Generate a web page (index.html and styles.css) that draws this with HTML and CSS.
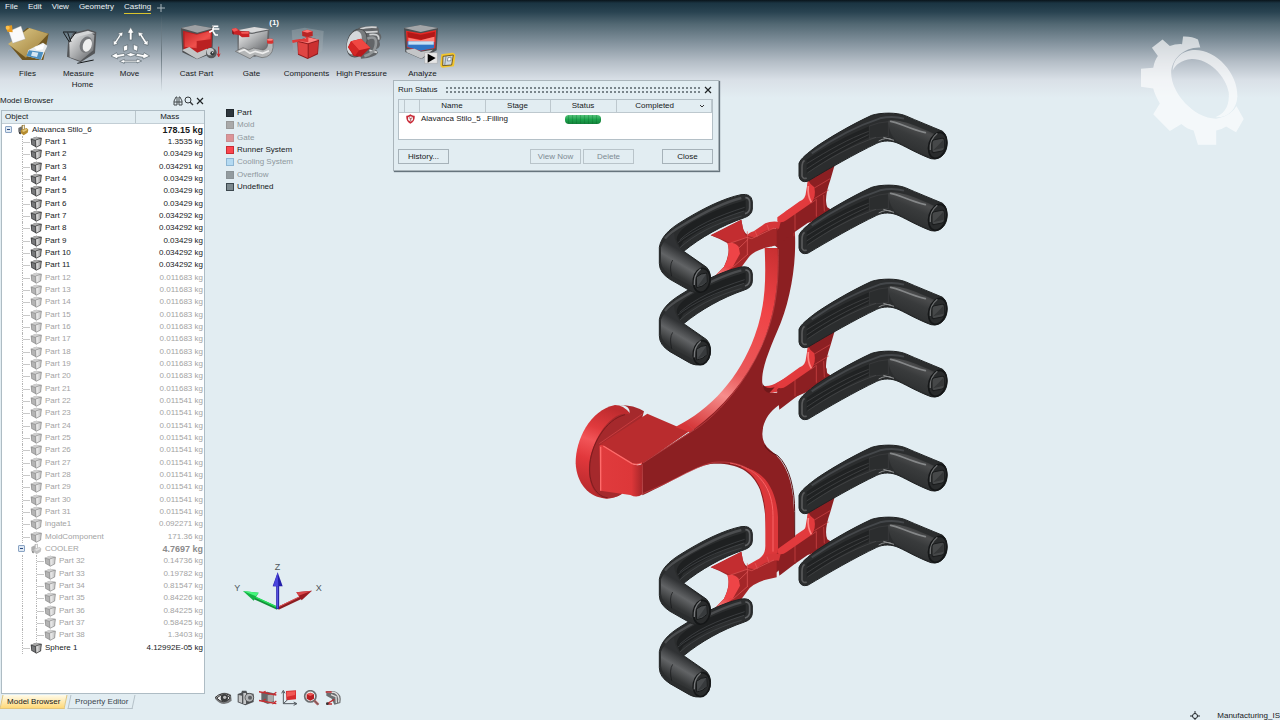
FILE: index.html
```
<!DOCTYPE html>
<html lang="en">
<head>
    <meta charset="UTF-8">
    <meta name="viewport" content="width=device-width, initial-scale=1.0">
    <title>Casting Simulation</title>
    <link rel="stylesheet" href="styles.css">
</head>
<body>
    <!-- Shared gradients and symbols -->
    <svg class="defs" width="0" height="0" aria-hidden="true">
        <defs>
            <linearGradient id="steel" x1="0" y1="0" x2="1" y2="1">
                <stop offset="0" stop-color="#f0f0f0"/><stop offset=".5" stop-color="#a9abad"/><stop offset="1" stop-color="#5d5f62"/>
            </linearGradient>
            <linearGradient id="steelDark" x1="0" y1="0" x2="1" y2="0">
                <stop offset="0" stop-color="#3c3d40"/><stop offset="1" stop-color="#a2a4a6"/>
            </linearGradient>
            <linearGradient id="redFace" x1="0" y1="0" x2="1" y2="1">
                <stop offset="0" stop-color="#c22426"/><stop offset=".6" stop-color="#f0504c"/><stop offset="1" stop-color="#b51f22"/>
            </linearGradient>
            <linearGradient id="gold" x1="0" y1="0" x2="1" y2="1">
                <stop offset="0" stop-color="#e0cd8c"/><stop offset="1" stop-color="#9b7a35"/>
            </linearGradient>
            <linearGradient id="cubeFront" x1="0" y1="0" x2="1" y2="0">
                <stop offset="0" stop-color="#f4f4f4"/><stop offset="1" stop-color="#8a8a8a"/>
            </linearGradient>
            <linearGradient id="tube" gradientUnits="userSpaceOnUse" x1="420" y1="70" x2="380" y2="160">
                <stop offset="0" stop-color="#2c2e2f"/><stop offset=".2" stop-color="#4b4c4d"/><stop offset=".45" stop-color="#393b3c"/><stop offset="1" stop-color="#2b2d2e"/>
            </linearGradient>
            <linearGradient id="tubeLeft" gradientUnits="userSpaceOnUse" x1="400" y1="235" x2="350" y2="320">
                <stop offset="0" stop-color="#303234"/><stop offset=".35" stop-color="#626466"/><stop offset=".7" stop-color="#343637"/><stop offset="1" stop-color="#242627"/>
            </linearGradient>
            <linearGradient id="sweep" gradientUnits="userSpaceOnUse" x1="630" y1="200" x2="380" y2="740">
                <stop offset="0" stop-color="#c93032"/><stop offset=".3" stop-color="#f04346"/><stop offset=".65" stop-color="#e9595a"/><stop offset=".78" stop-color="#f68d8c"/><stop offset="1" stop-color="#d53537"/>
            </linearGradient>
            <linearGradient id="flange" x1=".5" y1="0" x2=".3" y2="1">
                <stop offset="0" stop-color="#bd2b2e"/><stop offset=".25" stop-color="#e03a3d"/><stop offset=".4" stop-color="#f25558"/><stop offset=".6" stop-color="#e2383c"/><stop offset="1" stop-color="#b3282b"/>
            </linearGradient>
            <linearGradient id="blockFront" x1="0" y1="0" x2="1" y2="0">
                <stop offset="0" stop-color="#e03b3d"/><stop offset=".75" stop-color="#dd3739"/><stop offset="1" stop-color="#a62629"/>
            </linearGradient>
            <linearGradient id="fadeRed" x1="1" y1="0" x2="0" y2="1">
                <stop offset="0" stop-color="#e3373a"/><stop offset="1" stop-color="#ffb0ae"/>
            </linearGradient>

            <symbol id="cube" viewBox="0 0 36 36">
                <path d="M2 8 19 2 34 6 32 27 18 34 4 26Z" fill="#3f4042"/>
                <path d="M2 8 19 2 34 6 17 12Z" fill="#a9a9a9"/>
                <path d="M17 12 34 6 32 27 18 34Z" fill="url(#cubeFront)" stroke="#333" stroke-width="2"/>
                <path d="M5 11 15 14 16 30 6 25Z" fill="#77787a"/>
            </symbol>
            <symbol id="group" viewBox="0 0 36 36">
                <path d="M4 12 14 7 17 18 11 24 4 21Z" fill="#6d6d6d"/>
                <path d="M14 4 23 2 23 20 15 20Z" fill="#8d6d22"/>
                <path d="M17 6 21 4 21 18 17 19Z" fill="#f2eee0"/>
                <path d="M12 18 29 12 34 17 32 26 20 34 11 27Z" fill="#b58c2f"/>
                <path d="M14 20 28 14 31 18 20 24Z" fill="#e2c679"/>
                <path d="M4 21 11 24 12 31 7 30Z" fill="#353535"/>
            </symbol>

            <symbol id="armRight" overflow="visible">
                <path d="M57 190C62 176 82 160 110 139C150 112 210 76 275 46C305 37 350 37 376 47C410 62 455 80 488 94Q503 108 501 137C498 164 478 181 453 176C415 162 385 144 357 131C333 120 310 121 290 130C225 161 145 207 83 244Q60 249 57 228Z" fill="#2b2d2e" stroke="#202223" stroke-width="3"/>
                <path d="M325 62C350 58 385 65 470 105Q443 130 446 168C410 158 380 140 357 127C335 115 325 85 325 62Z" fill="url(#tube)"/>
                <path d="M95 160C165 112 230 78 300 55C330 48 352 50 372 56" fill="none" stroke="#44474a" stroke-width="6"/>
                <path d="M80 179C130 145 205 105 268 79V111C200 143 135 180 80 221Z" fill="#202223"/>
                <path d="M80 191C150 148 205 117 266 94M80 207C145 163 205 132 266 104M82 219C145 176 215 137 288 112" fill="none" stroke="#4a4c4d" stroke-width="2"/>
                <path d="M268 78 296 69 325 65M268 78V115L325 110V65" fill="none" stroke="#515355" stroke-width="1"/>
                <path d="M332 64C355 67 388 87 436 98" fill="none" stroke="#9a9c9d" stroke-width="5" stroke-linecap="round" opacity=".75"/>
                <path d="M310 112 342 121M296 123Q318 111 334 118" fill="none" stroke="#8f9192" stroke-width="3"/>
                <path d="M74 182Q66 184 66 205V228Q70 239 80 234" fill="none" stroke="#58595a" stroke-width="5"/>
                <ellipse cx="473" cy="136" rx="26" ry="40" transform="rotate(17 473 136)" fill="#292b2c" stroke="#151718" stroke-width="5"/>
                <path d="M451 150Q448 119 472 100" fill="none" stroke="#6b6d6e" stroke-width="4"/>
                <rect x="456" y="117" width="37" height="38" rx="7" transform="skewY(-12) translate(0 101)" fill="#464849" stroke="#1a1c1d" stroke-width="3"/>
                <path d="M459 151 475 136 490 119 491 143Z" fill="#353738"/>
            </symbol>

            <symbol id="armLeft" overflow="visible">
                <path d="M543 44Q574 39 577 64V88Q575 106 553 113C486 136 422 172 371 214L440 262Q456 280 450 308C444 338 413 345 388 331L330 298Q298 278 298 250V202C303 172 326 149 360 128C425 87 490 55 543 44Z" fill="#2b2d2e" stroke="#202223" stroke-width="3"/>
                <path d="M303 202Q313 176 342 160Q343 192 366 212L426 257Q402 279 402 322L344 292Q303 269 303 245Z" fill="url(#tubeLeft)"/>
                <path d="M315 176Q329 157 370 134C430 98 490 68 544 54" fill="none" stroke="#4b4d4f" stroke-width="7"/>
                <path d="M350 180C350 157 372 140 410 119C465 90 510 75 557 60V91C485 111 430 143 370 184L360 202Z" fill="#1e2021"/>
                <path d="M359 180C405 138 470 109 554 82M354 188C400 151 465 121 552 93M360 203C400 166 464 131 545 108" fill="none" stroke="#494c4e" stroke-width="2"/>
                <path d="M556 53Q568 53 569 66V83Q569 97 555 101" fill="none" stroke="#606264" stroke-width="5"/>
                <path d="M338 240Q327 257 335 289" fill="none" stroke="#151718" stroke-width="2"/>
                <ellipse cx="425" cy="301" rx="25" ry="36" transform="rotate(10 425 301)" fill="#292b2c" stroke="#151718" stroke-width="5"/>
                <path d="M403 315Q401 284 422 267" fill="none" stroke="#76787a" stroke-width="4"/>
                <path d="M409 291Q423 279 440 279L441 307Q427 322 410 323Z" fill="#484b4d" stroke="#17191a" stroke-width="3"/>
                <path d="M411 321 425 302 439 281 440 307Z" fill="#373a3c"/>
            </symbol>

            <!-- Feeder between a pair of right hand arms -->
            <symbol id="feederRight" overflow="visible">
                <path d="M84 240 166 188 151 240Q131 297 142 322L165 337 92 385 88 378 99 364 83 369 43 397-2 431-9 371 46 317 78 301Z" fill="#8c1f22"/>
                <path d="M84 240Q91 255 103 262Q109 292 94 309L20 360Q5 371-8 364V352L59 304Q77 297 78 276Z" fill="#e23a3d"/>
                <path d="M85 258Q82 287 94 307" stroke="#ff8584" stroke-width="5" fill="none"/>
                <path d="M87 386Q84 362 104 365L151 335 166 338 103 382Z" fill="#d63538"/>
                <path d="M103 264 152 235M103 296 146 270M94 309 109 298 109 350M131 285 133 334M45 342V391" stroke="#d3484a" stroke-width="2" fill="none"/>
            </symbol>
            <!-- Feeder between a pair of left hand arms -->
            <symbol id="feederLeft" overflow="visible">
                <path d="M452 166 544 119 548 141Q552 164 574 169L620 142 650 146V196L617 203Q575 216 564 235L540 267 455 313 447 306 492 260Q512 219 503 190Q481 177 452 166Z" fill="#a42628"/>
                <path d="M452 166 544 119 548 141Q552 164 561 171L512 189Q481 175 452 166Z" fill="#c32d30"/>
                <path d="M502 189Q524 185 536 200L540 221 518 261 448 313 492 260Q514 220 502 189Z" fill="#ee4447"/>
                <path d="M488 264 516 258 455 312 448 306Z" fill="url(#fadeRed)"/>
                <path d="M561 168Q566 157 581 154L616 130Q634 121 662 126L657 146Q622 143 585 172Z" fill="#d63639"/>
                <path d="M512 189 561 172 575 176 642 144M562 154V223M536 205 565 177M518 262 564 222M621 134 627 151M585 153 592 170" stroke="#e45a5b" stroke-width="2" fill="none"/>
            </symbol>
        </defs>
    </svg>

    <header class="app-header">
        <nav class="menu">
            <a href="#">File</a>
            <a href="#">Edit</a>
            <a href="#">View</a>
            <a href="#">Geometry</a>
            <a href="#" class="active">Casting</a>
            <button class="add-tab" aria-label="Add tab">
                <svg viewBox="0 0 8 8" width="8" height="8"><path d="M4 0V8M0 4H8" stroke="#a9b5bb" fill="none"/></svg>
            </button>
        </nav>
        <div class="ribbon">
            <section class="ribbon-group home">
                <div class="ribbon-items">
                    <button class="ribbon-item">
                        <svg viewBox="15 66 132 126">
                            <path d="M23 132 79 83 143 101 127 180 64 180Z" fill="#6f5621"/>
                            <path d="M21 132 85 84 142 101 75 173Z" fill="url(#gold)"/>
                            <path d="M82 150 126 128 139 137 121 179 77 168Z" fill="#e9edf0"/>
                            <path d="M84 151 127 157 119 179 76 167Z" fill="#4c8fc0"/>
                            <path d="M94 155 112 158 108 171 90 167Z" fill="#d6e6f2"/>
                            <path d="M100 141 130 132 126 148 107 151Z" fill="#fff"/>
                            <path d="M23 94 60 78 73 117 35 130Z" fill="#fafafa" stroke="#999"/>
                            <path d="M14 78 33 76 35 97 19 95Z" fill="#e79a1f"/>
                            <circle cx="20" cy="83" r="6" fill="#ffc04a"/>
                        </svg>
                        <span>Files</span>
                    </button>
                    <button class="ribbon-item">
                        <svg viewBox="174 66 132 126">
                            <path d="M222 99 267 88 292 96 288 160 245 187 204 170 207 128Z" fill="#545659"/>
                            <path d="M222 105 272 96 286 106 283 151 244 183 212 172 211 130Z" fill="url(#steel)"/>
                            <path d="M211 130 226 103 267 92 289 100 272 101 236 110Z" fill="#d4d5d6"/>
                            <ellipse cx="261" cy="134" rx="18" ry="25" transform="rotate(20 261 134)" fill="#77797c"/>
                            <ellipse cx="265" cy="136" rx="13" ry="20" transform="rotate(20 265 136)" fill="#eee"/>
                            <path d="M192 96H230M193 97 211 126M214 119 232 95M206 98 216 126M235 190 284 180" stroke="#171a1c" stroke-width="3" fill="none"/>
                        </svg>
                        <span>Measure</span>
                    </button>
                    <button class="ribbon-item">
                        <svg viewBox="321 66 132 126">
                            <g fill="#fdfdfd" stroke="#56636b" stroke-width="2">
                                <path d="M389 82 399 99H393V120H385V99H379Z"/>
                                <path d="M366 96 364 111 360 107 347 128 350 132 337 136 337 120 342 124 355 104 351 100Z"/>
                                <path d="M411 96 413 111 417 107 430 128 427 132 441 136 441 120 436 124 423 104 427 100Z"/>
                                <path d="M330 168 347 158 349 164 370 160 372 168 350 172 350 177Z"/>
                                <path d="M446 168 429 158 427 164 406 160 404 168 426 172 426 177Z"/>
                                <path d="M367 139 380 134V150L368 154ZM397 133 411 139 409 154 397 149ZM374 164 389 158 407 164 389 170Z"/>
                                <path d="M356 184 370 178V181H408V177L422 183 408 189V186H370V190Z"/>
                            </g>
                        </svg>
                        <span>Move</span>
                    </button>
                </div>
                <div class="ribbon-caption">Home</div>
            </section>
            <section class="ribbon-group casting">
                <div class="ribbon-items">
                    <button class="ribbon-item">
                        <svg viewBox="39 66 132 126">
                            <path d="M57 84 99 75 154 85 151 160 105 178 61 157Z" fill="#4e5052"/>
                            <path d="M57 84 99 75 154 85 106 98Z" fill="#9ea1a4"/>
                            <path d="M63 92 105 102 150 89 149 140 105 163 65 147Z" fill="#ba2022"/>
                            <path d="M68 96 104 104 146 93V118L104 123V145L68 140Z" fill="url(#redFace)"/>
                            <path d="M60 150 82 141 106 158 134 146 149 156 105 177Z" fill="#c2c4c5"/>
                            <path d="M142 97 153 91 153 79H169M154 87H172M153 94 160 105H168" stroke="#fff" stroke-width="5" fill="none"/>
                            <path d="M148 84 154 79" stroke="#454545" stroke-width="3"/>
                            <circle cx="148" cy="159" r="16" fill="#55585a"/><circle cx="145" cy="155" r="11" fill="#c3c6c8"/><circle cx="151" cy="160" r="6" fill="#323638"/><circle cx="152" cy="158" r="2" fill="#fff"/>
                            <path d="M170 140V169M166 161 170 170 174 161" stroke="#d12225" stroke-width="3" fill="none"/>
                        </svg>
                        <span>Cast Part</span>
                    </button>
                    <button class="ribbon-item">
                        <svg viewBox="204 66 132 126">
                            <path d="M226 91 277 81 322 88 320 155 278 170 227 155Z" fill="#626467"/>
                            <path d="M226 91 277 81 322 88 270 98Z" fill="#d8d9da"/>
                            <path d="M231 98 270 102 317 92 314 145 274 157 230 147Z" fill="url(#steel)"/>
                            <path d="M220 154 243 143 260 150 275 144 303 150Q316 148 317 133V127H333V143Q330 171 300 173L277 166 264 176Z" fill="#b5b7b8" stroke="#66686a" stroke-width="2"/>
                            <path d="M230 155 247 149 264 160 280 154 302 160 321 152" fill="none" stroke="#eee" stroke-width="5"/>
                            <path d="M209 87 222 84 236 94 262 94V111L240 112 231 105 214 103Z" fill="#c92225"/>
                            <path d="M209 87 222 84 229 91 216 95ZM237 96H260V101H239Z" fill="#f25a58"/>
                            <path d="M210 92 215 97V104L211 101Z" fill="#7d1315"/>
                            <rect x="315" y="116" width="19" height="15" rx="4" fill="#d43331"/><ellipse cx="324" cy="119" rx="9" ry="3" fill="#ff8580"/>
                        </svg>
                        <span>Gate</span>
                        <b class="badge">(1)</b>
                    </button>
                    <button class="ribbon-item">
                        <svg viewBox="366 66 132 126">
                            <path d="M386 91 425 83 482 93 478 154 436 174 390 151Z" fill="#a6b0b5" opacity=".4"/>
                            <path d="M398 93H478M409 104H472M470 95V145" stroke="#798890" opacity=".4"/>
                            <path d="M403 122 436 110 468 119 465 163 434 177 405 164Z" fill="#8f1b1d"/>
                            <path d="M403 122 436 112 468 119 435 130Z" fill="#ff8380"/>
                            <path d="M405 126 434 133V174L406 161Z" fill="#df4543"/>
                            <path d="M437 132 466 123 463 160 437 173Z" fill="#cb3030"/>
                            <path d="M417 94 433 89 449 94V108L433 112 418 108Z" fill="#b92525"/>
                            <path d="M417 94 433 89 449 94 433 98Z" fill="#ff7270"/>
                            <path d="M387 121 410 117 429 117V110H436V127L412 124 389 129Z" fill="#dd3b3a"/>
                        </svg>
                        <span>Components</span>
                    </button>
                    <button class="ribbon-item">
                        <svg viewBox="540 66 132 126">
                            <path d="M598 92Q588 84 604 80L642 78Q657 78 657 92V98Q670 108 658 124Q665 142 648 148L654 158Q647 172 603 176L596 120Z" fill="#626568"/>
                            <path d="M600 87Q623 79 650 82M607 97 653 95M628 104Q659 99 656 119M628 151 651 157" stroke="#d0d2d3" stroke-width="5" fill="none"/>
                            <ellipse cx="591" cy="129" rx="29" ry="43" transform="rotate(18 591 129)" fill="#787b7d" stroke="#4a4c4e" stroke-width="3"/>
                            <ellipse cx="583" cy="128" rx="21" ry="36" transform="rotate(18 583 128)" fill="#d4d8db"/>
                            <path d="M564 142 573 124 603 116 631 143 603 170 581 168Z" fill="#b8191c"/>
                            <path d="M573 124 603 116 631 143 597 151Z" fill="#f04742"/>
                            <path d="M564 142 573 124 597 151 585 168Z" fill="#d52726"/>
                            <path d="M622 116Q653 103 647 137Q644 160 613 169" fill="none" stroke="#929698" stroke-width="8"/>
                        </svg>
                        <span>High Pressure</span>
                    </button>
                    <button class="ribbon-item analyze">
                        <svg viewBox="720 66 132 126">
                            <path d="M729 84 778 75 831 84 827 151 781 177 733 156Z" fill="#4b4e51"/>
                            <path d="M729 84 778 75 831 84 779 96Z" fill="#a3a6a9"/>
                            <path d="M735 92 779 100 825 90 823 145 779 153 738 143Z" fill="#e52a26"/>
                            <path d="M739 96 779 104 822 95 821 110 781 119 740 112Z" fill="#b31817"/>
                            <path d="M742 113 779 121 820 110V126L742 125Z" fill="#ff8178"/>
                            <path d="M739 124 820 126 819 144 779 152 739 141Z" fill="#2f75c5"/>
                            <path d="M742 124H818V134H742Z" fill="#c6e0f5"/>
                            <path d="M735 149 761 146 780 155 816 149 781 176 737 157Z" fill="#c4c6c8"/>
                            <path d="M791 158H829V190H791Z" fill="#e6e6e6" stroke="#8d8d8d"/>
                            <path d="M800 161V188L824 174Z" fill="#000"/>
                            <path d="M841 163 875 158Q884 160 883 168L879 199 845 203Q838 202 838 194Z" fill="#f3c52d"/>
                            <path d="M846 169 877 165 872 195 845 197Z" fill="#cdd5dc" stroke="#775e1c" stroke-width="3"/>
                            <path d="M855 168 851 197M861 173 870 171V182L859 183Z" stroke="#5f6d77" stroke-width="2" fill="#fff"/>
                        </svg>
                        <span>Analyze</span>
                    </button>
                </div>
            </section>
        </div>
        <svg class="watermark" viewBox="60 45 320 335" aria-hidden="true">
            <path d="M190 48Q217 47 235 57L242 81C193 79 155 115 154 158C155 219 221 294 290 296C323 292 343 273 351 258L373 297 350 337 320 320Q307 329 290 332V375H235L222 332Q202 327 185 312L150 333 100 283 120 250Q105 225 100 205L63 200V145L100 142Q104 120 114 107L96 82 128 57 150 77Q167 70 187 71Z"/>
            <path d="M159 151C160 109 195 89 226 89C291 89 355 159 354 228C352 269 323 294 288 292C322 278 330 250 328 218C320 164 263 114 216 116C183 119 166 135 159 151Z"/>
        </svg>
    </header>

    <main class="workspace">
        <aside class="sidebar">
            <div class="panel-title">
                <h2>Model Browser</h2>
                <button aria-label="Find"><svg viewBox="0 0 10 10"><path d="M1 9V5L3 1H4V9ZM9 9V5L7 1H6V9ZM1 6H9" fill="none" stroke="#43484b"/></svg></button>
                <button aria-label="Search"><svg viewBox="0 0 10 10"><circle cx="4" cy="4" r="3" fill="none" stroke="#34393c"/><path d="M6 6 9 9" stroke="#34393c" stroke-width="1.4"/></svg></button>
                <button aria-label="Close panel"><svg viewBox="0 0 10 10"><path d="M2 2 8 8M8 2 2 8" stroke="#202426" stroke-width="1.2"/></svg></button>
            </div>
            <div class="tree-panel">
                <table class="tree">
                    <thead>
                        <tr><th>Object</th><th class="mass">Mass</th></tr>
                    </thead>
                    <tbody id="treeBody">
                        <!-- Rows are added by the script -->
                    </tbody>
                </table>
            </div>
            <nav class="panel-tabs">
                <a href="#" class="active"><span>Model Browser</span></a>
                <a href="#"><span>Property Editor</span></a>
            </nav>
        </aside>

        <section class="viewport">
            <svg class="model" viewBox="0 -240 1200 1830" role="img" aria-label="Casting model">
                <!-- Runner -->
                <path d="M165 675C90 690 46 780 47 850C50 910 85 953 140 956Q166 955 185 942L210 700Q190 675 165 675Z" fill="url(#flange)"/>
                <path d="M208 703C155 686 92 782 87 859C84 920 110 955 139 955Q164 955 185 942L252 694Q219 672 165 675Q215 672 208 703Z" fill="#a5292c"/>
                <path d="M195 704C137 718 90 797 89 864C87 913 111 951 143 953" fill="none" stroke="#7d1b1e" stroke-width="3"/>
                <path d="M122 792 262 701 356 742 390 752 247 852 213 852Z" fill="#b92c2e"/>
                <path d="M118 799Q120 789 136 800L214 850Q232 861 247 851V943Q231 955 211 945L121 932Z" fill="url(#blockFront)"/>
                <path d="M130 798 216 851Q231 856 246 849M122 800V932" fill="none" stroke="#ff6c6b" stroke-width="4"/>
                <path d="M118 791 247 702" stroke="#d94749" stroke-width="2"/>
                <path d="M346 741C452 689 539 592 584 468C617 377 618 301 614 204L656 204C659 304 648 408 603 503C556 607 481 698 390 757Z" fill="url(#sweep)"/>
                <path d="M246 850 400 749C487 684 557 603 604 500C645 405 657 309 653 204L637 190 648 145 703 112 705 163C709 259 690 370 651 455C623 521 603 572 607 610Q611 646 661 637L745 592 800 565V610L718 646C651 669 609 705 607 762Q607 794 633 812C682 848 702 914 702 1000L706 1151 680 1151 650 1177 616 1189 585 1191 606 1133Q619 1120 618 1098C619 1034 617 981 600 929C574 866 520 847 451 852C402 860 338 904 247 946Z" fill="#8c1f22"/>
                <path d="M541 860C596 884 616 946 616 1010V1095Q617 1129 590 1140L560 1157 578 1173 630 1145Q653 1131 654 1105V1011C650 930 613 868 541 860Z" fill="#dc373a"/>
                <path d="M510 849C598 864 639 927 639 1007V1115" fill="none" stroke="#fa6466" stroke-width="3"/>
                <path d="M653 125Q668 113 678 93L743 57Q757 45 755 22L765 30 769 65 706 104 684 139 653 151Z" fill="#e9474a"/>
                <path d="M607 617Q630 622 654 606L741 560 757 535 768 563 759 580 664 630Q622 651 607 617Z" fill="#db383b"/>
                <path d="M607 609Q614 629 644 622L628 639Q608 635 607 609Z" fill="#6f181a"/>
                <path d="M706 1066 743 1041 757 1012 769 1056 709 1105Z" fill="#df3d40"/>
                <path d="M247 853V944M249 849 402 750 382 730M403 750C506 683 621 526 646 361C655 302 655 260 655 207M248 941C370 889 404 860 461 847C557 839 600 883 624 944" fill="none" stroke="#c94648" stroke-width="2"/>
                <path d="M702 104V169M634 145V200M650 639 726 602 796 570M706 603V650M722 594V642M706 1085V1148" fill="none" stroke="#ce4547" stroke-width="2"/>
                <path d="M614 796Q620 812 653 827C690 861 704 930 704 994V1150" fill="none" stroke="#571214" stroke-width="3"/>
                <use href="#feederRight" transform="translate(660 -240)"/>
                <use href="#feederRight" transform="translate(660 258)"/>
                <use href="#feederRight" transform="translate(660 756)"/>
                <use href="#feederLeft"/>
                <use href="#feederLeft" transform="translate(0 996)"/>
                <!-- Levers -->
                <use href="#armRight" transform="translate(660 -240)"/>
                <use href="#armRight" transform="translate(660 -24)"/>
                <use href="#armRight" transform="translate(660 258)"/>
                <use href="#armRight" transform="translate(660 474)"/>
                <use href="#armRight" transform="translate(660 756)"/>
                <use href="#armRight" transform="translate(660 972)"/>
                <use href="#armLeft" transform="translate(0 217)"/>
                <use href="#armLeft"/>
                <use href="#armLeft" transform="translate(0 1213)"/>
                <use href="#armLeft" transform="translate(0 996)"/>
            </svg>

            <ul class="legend">
                <li><i class="swatch part"></i>Part</li>
                <li class="off"><i class="swatch mold"></i>Mold</li>
                <li class="off"><i class="swatch gate"></i>Gate</li>
                <li><i class="swatch runner"></i>Runner System</li>
                <li class="off"><i class="swatch cooling"></i>Cooling System</li>
                <li class="off"><i class="swatch overflow"></i>Overflow</li>
                <li><i class="swatch undefined"></i>Undefined</li>
            </ul>

            <svg class="axes" viewBox="80 30 282 150">
                <path d="M217 172 142 138" stroke="#13903a" stroke-width="9"/>
                <path d="M217 169 142 135" stroke="#25e45c" stroke-width="4"/>
                <path d="M113 120 160 125 145 149Z" fill="#14b244"/><path d="M113 120 160 125 152 136Z" fill="#45f57b"/>
                <path d="M218 172 294 136" stroke="#8b1e22" stroke-width="9"/>
                <path d="M219 168 290 134" stroke="#e05054" stroke-width="3"/>
                <path d="M320 119 273 124 289 148Z" fill="#991a20"/><path d="M320 119 273 124 280 134Z" fill="#d94549"/>
                <path d="M217 174V98" stroke="#2a25a5" stroke-width="9"/><path d="M216 172V98" stroke="#625cf0" stroke-width="3"/>
                <path d="M217 64 232 106H202Z" fill="#241faa"/><path d="M217 64 219 106H204Z" fill="#4b45dc"/>
                <text x="208" y="58">Z</text>
                <text x="87" y="121">Y</text>
                <text x="331" y="121">X</text>
            </svg>

            <div class="view-tools">
                <button aria-label="View"><svg viewBox="30 420 54 48"><path d="M28 444Q53 418 78 434L80 452Q53 476 28 444Z" fill="#77797b"/><path d="M30 443Q52 422 78 438M35 444Q57 424 76 444Q55 466 35 444" fill="#eee" stroke="#333" stroke-width="3"/><circle cx="58" cy="444" r="11" fill="#3b3d3e"/><circle cx="59" cy="442" r="5" fill="#bbb"/></svg></button>
                <button aria-label="Snapshot"><svg viewBox="96 420 54 48"><path d="M98 432 109 428 111 422H124L127 429 146 431V456L121 466 98 457Z" fill="#505356"/><path d="M101 435 111 437V459L101 455ZM115 429H123V462H115Z" fill="#c5c7c8"/><circle cx="133" cy="443" r="13" fill="#b2b4b6" stroke="#333" stroke-width="2"/><circle cx="135" cy="443" r="6" fill="#5d6063"/></svg></button>
                <button aria-label="Clip"><svg viewBox="162 420 54 48"><path d="M169 430 186 425 207 430V456L188 462 169 454Z" fill="#66686a"/><path d="M188 436 206 431V453L188 460Z" fill="#aaa"/><path d="M160 425 214 435M160 451 214 461M169 429 182 424M171 455 182 447M203 435 214 427M202 462 214 453" stroke="#c52d31" stroke-width="4"/></svg></button>
                <button aria-label="Plane"><svg viewBox="228 420 54 48"><path d="M243 423 273 421V448L244 451Z" fill="#d62c2f"/><path d="M246 425 271 424 270 435 246 440Z" fill="#f15956"/><path d="M235 461V424M230 430 235 421 240 430M235 461H273M266 456 276 461 266 466M235 461 248 449" fill="none" stroke="#535b60" stroke-width="3"/></svg></button>
                <button aria-label="Zoom"><svg viewBox="294 420 54 48"><circle cx="316" cy="439" r="17" fill="#eee" stroke="#6b6d6f" stroke-width="5"/><path d="M305 433 316 428 327 433V446L316 452 305 446Z" fill="#b71e22"/><path d="M305 433 316 428 327 433 316 438Z" fill="#ee5754"/><path d="M328 452 340 464" stroke="#b66" stroke-width="8"/><path d="M328 452 340 464" stroke="#555" stroke-width="3"/></svg></button>
                <button aria-label="Measure distance"><svg viewBox="360 420 54 48"><path d="M364 424H389Q412 432 406 459L388 464 380 446 364 437Z" fill="#6c6e70"/><path d="M367 427H388Q405 434 401 457M378 434 393 440 394 459" fill="none" stroke="#ddd" stroke-width="4"/><path d="M362 426H380M365 462 388 448M365 462H381" stroke="#bc2c30" stroke-width="4"/><circle cx="367" cy="461" r="4" fill="#333"/></svg></button>
            </div>
        </section>
    </main>

    <footer class="status-bar">
        <svg viewBox="0 0 10 10" width="10" height="10"><circle cx="5" cy="5" r="2.5" fill="none" stroke="#24292c"/><path d="M5 0V3M5 7V10M0 5H3M7 5H10" stroke="#24292c"/></svg>
        <span>Manufacturing_IS</span>
    </footer>

    <div class="dialog" role="dialog" aria-labelledby="runTitle">
        <div class="dialog-title">
            <h2 id="runTitle">Run Status</h2>
            <span class="grip"></span>
            <button aria-label="Close window"><svg viewBox="0 0 10 10"><path d="M2 2 8 8M8 2 2 8" stroke="#202426" stroke-width="1.2"/></svg></button>
        </div>
        <div class="run-list">
            <table>
                <thead>
                    <tr>
                        <th class="c-edge"></th><th class="c-icon"></th><th class="c-name">Name</th><th class="c-stage">Stage</th><th class="c-status">Status</th>
                        <th><div class="completed">Completed<svg viewBox="0 0 6 4" width="6" height="4"><path d="M1 1 3 3 5 1" fill="none" stroke="#333"/></svg></div></th>
                    </tr>
                </thead>
                <tbody>
                    <tr>
                        <td></td>
                        <td class="shield"><svg viewBox="0 0 27 30" width="9" height="10"><path d="M1 5Q8 6 13 1Q19 6 26 5Q28 23 13 29Q-1 23 1 5Z" fill="#c92a38"/><path d="M6 10 14 7 21 10V18L14 23 6 18Z" fill="#f5e9e9"/><path d="M14 13V22M9 11 14 14 19 11" stroke="#8c2530" stroke-width="2" fill="none"/></svg></td>
                        <td>Alavanca Stilo_5 ...</td>
                        <td>Filling</td>
                        <td><div class="progress"></div></td>
                        <td></td>
                    </tr>
                </tbody>
            </table>
        </div>
        <div class="dialog-buttons">
            <button>History...</button>
            <div class="middle">
                <button disabled>View Now</button>
                <button disabled>Delete</button>
            </div>
            <button>Close</button>
        </div>
    </div>

    <script>
        // name, mass, depth, dimmed
        const rows = [['Alavanca Stilo_6', '178.15', 0, false]];
        const masses = ['1.3535', '0.03429', '0.034291', '0.03429', '0.03429', '0.03429', '0.034292', '0.034292', '0.03429', '0.034292', '0.034292'];
        masses.forEach((mass, i) => rows.push([`Part ${i + 1}`, mass, 1, false]));
        for (let i = 12; i <= 31; i++) {
            rows.push([`Part ${i}`, i <= 21 ? '0.011683' : '0.011541', 1, true]);
        }
        rows.push(['ingate1', '0.092271', 1, true]);
        rows.push(['MoldComponent', '171.36', 1, true]);
        rows.push(['COOLER', '4.7697', 1, true]);
        ['0.14736', '0.19782', '0.81547', '0.84226', '0.84225', '0.58425', '1.3403'].forEach((mass, i) => {
            rows.push([`Part ${i + 32}`, mass, 2, true]);
        });
        rows.push(['Sphere 1', '4.12992E-05', 1, false]);

        const body = document.getElementById('treeBody');
        rows.forEach(([name, mass, depth, dimmed]) => {
            const isGroup = depth === 0 || name === 'COOLER';
            const tr = document.createElement('tr');
            tr.className = `depth-${depth}${isGroup ? ' group' : ''}${dimmed ? ' dimmed' : ''}`;
            const branch = isGroup ? '<button class="toggle" aria-label="Collapse"></button>' : '<span class="branch"></span>';
            const trunk = depth === 2 ? '<span class="trunk"></span>' : '';
            tr.innerHTML = `
                <td><div class="node">${trunk}${branch}<svg class="node-icon"><use href="#${isGroup ? 'group' : 'cube'}"/></svg><span>${name}</span></div></td>
                <td class="mass">${mass} kg</td>
            `;
            body.appendChild(tr);
        });
    </script>
</body>
</html>
```
FILE: styles.css
```
* {
    box-sizing: border-box;
}
body {
    margin: 0;
    min-height: 100vh;
    display: flex;
    flex-direction: column;
    position: relative;
    overflow: hidden;
    font-family: "Liberation Sans", Arial, sans-serif;
    font-size: 8px;
    line-height: 10px;
    color: #16191b;
    background: #e2edf2 linear-gradient(to bottom, #0a141b 0, #1a3442 3px, #294351 12px, #526873 24px, #8695a0 44px, #b5bec7 62px, #d9e0e7 80px, #e2edf2 98px) no-repeat 0 0 / 100% 98px;
}
.defs {
    position: absolute;
}
button {
    font: inherit;
    color: inherit;
    padding: 0;
    border: 0;
    background: none;
    cursor: pointer;
}
h2 {
    margin: 0;
    font-size: 8px;
    font-weight: normal;
}
a {
    color: inherit;
    text-decoration: none;
}
svg {
    display: block;
}
table {
    width: 100%;
    border-collapse: collapse;
    table-layout: fixed;
}
th {
    font-weight: normal;
}

/* Menu and ribbon */
.app-header {
    position: relative;
    height: 95px;
}
.menu {
    display: flex;
    gap: 10px;
    height: 15px;
    padding: 2px 5px 0;
    color: #eef3f5;
}
.menu a {
    height: 12px;
}
.menu .active {
    border-bottom: 1px solid #d9c32c;
}
.add-tab {
    height: 11px;
    margin-left: -4px;
}
.ribbon {
    display: flex;
}
.ribbon-group {
    padding: 7px 6px 0 2px;
}
.ribbon-group.home {
    border-right: 1px solid;
    border-image: linear-gradient(transparent, #69777f 50%, transparent) 1;
}
.ribbon-items {
    display: flex;
}
.ribbon-item {
    position: relative;
    display: flex;
    flex-direction: column;
    align-items: center;
    gap: 5px;
    width: 51px;
    white-space: nowrap;
}
.ribbon-item svg {
    width: 44px;
    height: 42px;
    overflow: visible;
}
.casting {
    padding-left: 7px;
}
.casting .ribbon-item {
    width: 55px;
}
.casting .analyze {
    margin-left: 6px;
}
.ribbon-caption {
    padding-left: 8px;
    line-height: 12px;
    text-align: center;
}
.badge {
    position: absolute;
    top: -4px;
    right: 0;
    color: #fff;
}
.watermark {
    position: absolute;
    right: 34px;
    top: 35px;
    width: 106px;
    height: 112px;
    fill: #fff;
    opacity: .65;
}

/* Model browser */
.workspace {
    flex: 1;
    display: flex;
}
.sidebar {
    width: 205px;
    display: flex;
    flex-direction: column;
}
.panel-title {
    display: flex;
    align-items: center;
    gap: 1px;
    height: 15px;
    padding: 0 0 3px;
}
.panel-title h2 {
    flex: 1;
}
.panel-title svg,
.dialog-title svg {
    width: 10px;
    height: 10px;
}
.tree-panel {
    flex: 1;
    margin-left: 1px;
    background: #fff;
    border: 1px solid #aebcc4;
}
.tree th {
    height: 12px;
    padding: 0 3px;
    text-align: left;
    background: #e2edf2;
    border-bottom: 1px solid #c2ced5;
}
.tree th.mass {
    width: 69px;
    text-align: center;
    border-left: 1px solid #b9c5cb;
}
.tree td {
    height: 12px;
    padding: 0;
    white-space: nowrap;
}
.tree tbody tr:nth-child(3n) td {
    height: 13px;
}
.tree td.mass {
    padding-right: 1px;
    text-align: right;
}
.group td.mass {
    font-size: 9px;
    font-weight: bold;
}
.node {
    display: flex;
    align-items: center;
    height: 12px;
    padding-left: 20px;
}
.depth-0 .node {
    padding-left: 3px;
}
.depth-1.group .node {
    padding-left: 16px;
}
.node-icon {
    width: 12px;
    height: 12px;
    margin-right: 3px;
}
.branch {
    width: 8px;
    height: 12px;
    border-left: 1px dotted #b5b5b5;
    background: linear-gradient(to right, #c9c9c9, #c9c9c9) no-repeat 0 6px / 7px 1px;
}
.trunk {
    width: 14px;
    height: 12px;
    border-left: 1px dotted #b5b5b5;
}
.toggle {
    width: 7px;
    height: 7px;
    margin-right: 5px;
    border: 1px solid #8aa4c4;
    border-radius: 1px;
    background: linear-gradient(#2c4a80, #2c4a80) no-repeat center / 3px 1px, #dfe9f4;
}
.dimmed {
    color: #a3a3a3;
}
.dimmed .node-icon {
    opacity: .55;
    filter: grayscale(1);
}
.dimmed.group td.mass {
    color: #8c8c8c;
}
.panel-tabs {
    display: flex;
    height: 17px;
    padding: 1px 0 0 1px;
    line-height: 13px;
}
.panel-tabs a {
    height: 14px;
    padding: 0 5px;
    margin-right: 3px;
    border: 1px solid #b5c1c8;
    border-top: 0;
    transform: skewX(-12deg);
    color: #3b464e;
}
.panel-tabs span {
    display: block;
    transform: skewX(12deg);
}
.panel-tabs .active {
    color: #16191b;
    border-color: #e3c67b;
    background: linear-gradient(#fffbea, #ffd978);
}

/* 3D view */
.viewport {
    flex: 1;
    position: relative;
    display: flex;
    flex-direction: column;
    align-items: flex-start;
    padding: 12px 10px 5px;
}
.model {
    position: absolute;
    left: 355px;
    top: 5px;
    width: 400px;
    height: 610px;
}
.legend {
    margin: 0 0 auto;
    padding: 0 0 0 11px;
    list-style: none;
}
.legend li {
    display: flex;
    align-items: center;
    gap: 3px;
    height: 12px;
}
.legend li:nth-child(3n) {
    height: 13px;
}
.legend .off {
    color: #8e989d;
}
.swatch {
    width: 8px;
    height: 8px;
    border: 1px solid #7d878b;
}
.part {
    background: #2d363c;
    border-color: #20282d;
}
.mold {
    background: #a9a9a9;
    border-color: #999;
}
.gate {
    background: #dc9497;
    border-color: #c78d91;
}
.runner {
    background: #fb454d;
    border-color: #c92d34;
}
.cooling {
    background: #b4daf2;
    border-color: #8db6d3;
}
.overflow {
    background: #929b9f;
    border-color: #8a9296;
}
.undefined {
    background: #7b888d;
    border-color: #3c484e;
}
.axes {
    width: 94px;
    height: 50px;
    margin: 0 0 79px 17px;
}
.axes text {
    font-size: 27px;
    fill: #50585c;
}
.view-tools {
    display: flex;
    gap: 4px;
}
.view-tools svg {
    width: 18px;
    height: 16px;
}
.status-bar {
    display: flex;
    align-items: center;
    justify-content: flex-end;
    gap: 17px;
    height: 9px;
    overflow: hidden;
}

/* Run status window */
.dialog {
    position: absolute;
    left: 393px;
    top: 80px;
    width: 326px;
    padding: 4px 5px 6px 4px;
    background: #e2edf2;
    border: 1px solid #aab5bb;
    box-shadow: 1px 1px 1px #66747d;
}
.dialog-title {
    display: flex;
    align-items: center;
    gap: 8px;
    height: 10px;
}
.grip {
    flex: 1;
    height: 6px;
    background: radial-gradient(circle at 1px 1px, #7a858b 1px, transparent 1px) 0 0 / 4px 4px;
}
.dialog-title button {
    margin-left: -5px;
}
.run-list {
    height: 41px;
    margin: 4px 0 9px;
    background: #fff;
    border: 1px solid #b4c0c7;
}
.run-list th {
    height: 12px;
    padding: 0;
    background: #e2edf2;
    border-right: 1px solid #bdc8ce;
    border-bottom: 1px solid #bdc8ce;
}
.run-list td {
    height: 14px;
    padding: 0 2px;
    white-space: nowrap;
}
.c-edge {
    width: 5px;
}
.c-icon {
    width: 15px;
}
.c-name {
    width: 66px;
}
.c-stage {
    width: 65px;
}
.c-status {
    width: 66px;
}
.completed {
    display: flex;
    align-items: center;
    justify-content: flex-end;
    gap: 25px;
    padding-right: 6px;
}
.progress {
    width: 36px;
    height: 9px;
    margin: 0 auto;
    border-radius: 4px;
    background: repeating-linear-gradient(to right, transparent 0, transparent 3px, rgba(0, 90, 30, .25) 3px, rgba(0, 90, 30, .25) 4px), linear-gradient(#58c47d, #1da34c 50%, #13803a);
}
.dialog-buttons {
    display: flex;
    justify-content: space-between;
}
.dialog-buttons .middle {
    display: flex;
    gap: 2px;
    margin-left: 53px;
}
.dialog-buttons button {
    width: 51px;
    height: 15px;
    border: 1px solid #a6b2b9;
}
.dialog-buttons button:disabled {
    color: #7e8b92;
    border-color: #b9c4ca;
}
```
